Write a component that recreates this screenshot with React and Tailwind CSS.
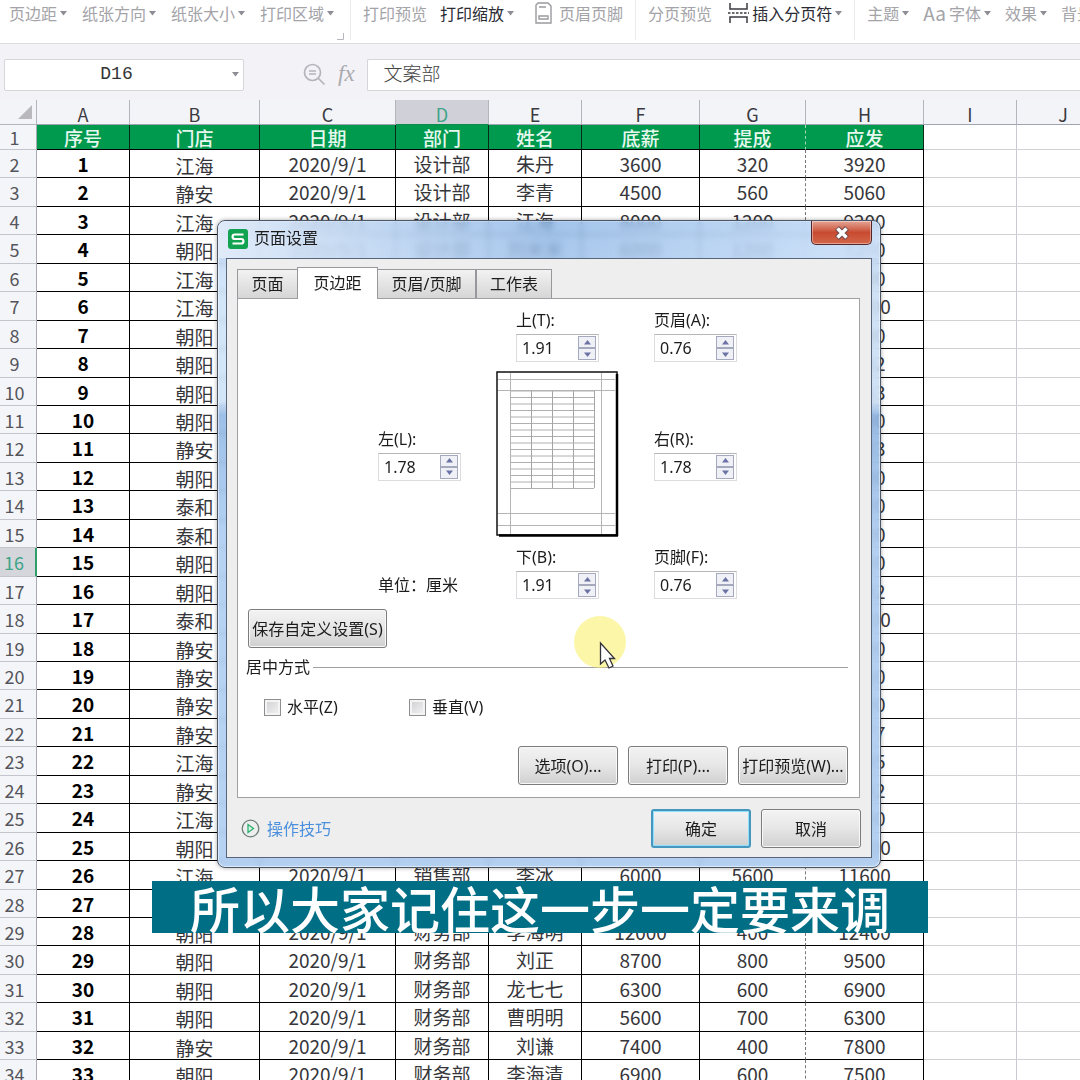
const rows = [
  ['江海', '2020/9/1', '设计部', '朱丹', '3600', '320', '3920'],
  ['静安', '2020/9/1', '设计部', '李青', '4500', '560', '5060'],
  ['江海', '2020/9/1', '设计部', '江海', '8000', '1200', '9200'],
  ['朝阳', '2020/9/1', '设计部', '刘米米', '6000', '1200', '7200'],
  ['江海', '', '', '', '', '', '4300'],
  ['江海', '', '', '', '', '', '10200'],
  ['朝阳', '', '', '', '', '', '6500'],
  ['朝阳', '', '', '', '', '', '5432'],
  ['朝阳', '', '', '', '', '', '4563'],
  ['朝阳', '', '', '', '', '', '7800'],
  ['静安', '', '', '', '', '', '6323'],
  ['朝阳', '', '', '', '', '', '5600'],
  ['泰和', '', '', '', '', '', '7200'],
  ['泰和', '', '', '', '', '', '6900'],
  ['朝阳', '', '', '', '', '', '8100'],
  ['朝阳', '', '', '', '', '', '5642'],
  ['泰和', '', '', '', '', '', '10600'],
  ['静安', '', '', '', '', '', '7300'],
  ['静安', '', '', '', '', '', '6600'],
  ['静安', '', '', '', '', '', '5900'],
  ['静安', '', '', '', '', '', '4877'],
  ['江海', '', '', '', '', '', '6745'],
  ['静安', '', '', '', '', '', '7532'],
  ['江海', '', '', '', '', '', '8800'],
  ['朝阳', '', '', '', '', '', '12300'],
  ['江海', '2020/9/1', '销售部', '李冰', '6000', '5600', '11600'],
  ['', '', '', '', '', '', ''],
  ['朝阳', '2020/9/1', '财务部', '李海明', '12000', '400', '12400'],
  ['朝阳', '2020/9/1', '财务部', '刘正', '8700', '800', '9500'],
  ['朝阳', '2020/9/1', '财务部', '龙七七', '6300', '600', '6900'],
  ['朝阳', '2020/9/1', '财务部', '曹明明', '5600', '700', '6300'],
  ['静安', '2020/9/1', '财务部', '刘谦', '7400', '400', '7800'],
  ['朝阳', '2020/9/1', '财务部', '李海清', '6900', '600', '7500'],
];

const columns = ['A', 'B', 'C', 'D', 'E', 'F', 'G', 'H', 'I', 'J'];
const headings = ['序号', '门店', '日期', '部门', '姓名', '底薪', '提成', '应发'];

function Arrow() {
  return (
    <svg width="7" height="5" viewBox="0 0 7 5" className="shrink-0">
      <path d="M0 0h7L3.5 4.5z" fill="#8d8d95" />
    </svg>
  );
}

function Tool({ label, arrow, active, children }) {
  return (
    <button
      type="button"
      className={`flex h-[26px] shrink-0 items-center gap-[3px] whitespace-nowrap ${active ? 'text-[#2b2b33]' : 'text-[#a3a3a8]'}`}
    >
      {children}
      <span>{label}</span>
      {arrow && <Arrow />}
    </button>
  );
}

function Toolbar() {
  return (
    <div className="flex h-11 shrink-0 overflow-hidden border-b border-[#dcdce0] bg-white text-[16px] leading-6">
      <div className="flex h-10 shrink-0 gap-[15px] border-r border-[#ececf0] pr-[6px] pl-[9px]">
        <Tool label="页边距" arrow />
        <Tool label="纸张方向" arrow />
        <Tool label="纸张大小" arrow />
        <Tool label="打印区域" arrow />
        <svg width="7" height="7" viewBox="0 0 7 7" className="-ml-3 self-end">
          <path d="M6.5 0v6.5H0" fill="none" stroke="#b5b5bb" />
        </svg>
      </div>
      <div className="flex h-10 shrink-0 gap-[13px] border-r border-[#ececf0] px-3">
        <Tool label="打印预览" />
        <Tool label="打印缩放" arrow active />
        <Tool label="页眉页脚">
          <svg width="17" height="22" viewBox="0 0 17 22" className="mr-1 ml-2" fill="none" stroke="#9a9aa0" strokeWidth="1.4">
            <path d="M3 1h10l3 3v17H1V3z" />
            <path d="M4 5h7M4 17v-3h9v3z" />
          </svg>
        </Tool>
      </div>
      <div className="flex h-10 shrink-0 gap-4 border-r border-[#ececf0] px-3">
        <Tool label="分页预览" />
        <Tool label="插入分页符" arrow active>
          <svg width="21" height="22" viewBox="0 0 21 22" fill="none" stroke="#3a3a40" strokeWidth="1.5">
            <path d="M2 1v6h17V1M2 21v-6h17v6" />
            <path d="M0 11h21" strokeDasharray="2.5 1.5" />
          </svg>
        </Tool>
      </div>
      <div className="flex h-10 shrink-0 gap-[14px] px-3">
        <Tool label="主题" arrow />
        <Tool label="字体" arrow>
          <span className="text-[19px]">Aa</span>
        </Tool>
        <Tool label="效果" arrow />
        <Tool label="背景" />
      </div>
    </div>
  );
}

function FormulaBar() {
  return (
    <div className="flex h-14 shrink-0 items-center bg-[#f3f3f7] pt-[5px] pl-1">
      <div className="flex h-8 w-60 shrink-0 items-center rounded-xs border border-[#d5d5da] bg-white pr-1">
        <input
          aria-label="名称框"
          defaultValue="D16"
          className="min-w-0 flex-1 bg-transparent pr-1 text-center font-['Liberation_Mono',monospace] text-[18px] text-[#333] outline-none"
        />
        <Arrow />
      </div>
      <svg width="23" height="23" viewBox="0 0 23 23" className="ml-[59px] shrink-0" fill="none" stroke="#b4b4ba" strokeWidth="1.7">
        <circle cx="9.5" cy="9.5" r="8" />
        <path d="M15.5 15.5l6 6M6 8h7M6 11h7" />
      </svg>
      <span className="mr-3 ml-3 font-['Liberation_Serif',serif] text-[23px] text-[#aaaab0] italic">fx</span>
      <input
        aria-label="编辑栏"
        defaultValue="文案部"
        className="h-8 min-w-0 flex-1 rounded-l-xs border border-r-0 border-[#d5d5da] bg-white pb-1 pl-4 text-[19px] font-light text-[#444] outline-none"
      />
    </div>
  );
}

function RowHead({ n }) {
  const selected = n === 16;
  return (
    <th
      scope="row"
      className={`border-b pr-[7px] text-[18px] font-normal ${
        selected
          ? 'border-r-2 border-r-[#2f9e6b] border-b-[#c4c4cc] bg-[#d5d5dc] text-[#3ea588]'
          : 'border-r border-r-[#aaaab4] border-b-[#c4c4cc] bg-[#f4f5f9] text-[#55555c]'
      }`}
    >
      {n}
    </th>
  );
}

function Sheet() {
  return (
    <div className="min-h-0 flex-1 overflow-hidden bg-white">
      <table className="w-[1110px] table-fixed border-separate border-spacing-0 text-center text-[19px] leading-5 whitespace-nowrap text-[#36363a]">
        <colgroup>
          <col className="w-[37px]" />
          <col className="w-[93px]" />
          <col className="w-[130px]" />
          <col className="w-[136px]" />
          <col className="w-[93px]" />
          <col className="w-[93px]" />
          <col className="w-[118px]" />
          <col className="w-[106px]" />
          <col className="w-[118px]" />
          <col className="w-[93px]" />
          <col className="w-[93px]" />
        </colgroup>
        <thead>
          <tr className="h-[25px] bg-[#f3f4f8]">
            <td className="border-r border-b border-[#b4b4bc]">
              <svg width="14" height="14" viewBox="0 0 14 14" className="mr-1 ml-auto">
                <path d="M14 0v14H0z" fill="#b9b9bd" />
              </svg>
            </td>
            {columns.map((c) => (
              <th
                key={c}
                scope="col"
                className={`border-r border-b border-r-[#b4b4bc] pt-[3px] text-[18px] font-normal ${
                  c === 'D' ? 'border-b-[#0f8a4a] bg-[#d0d0d9] text-[#3ea588]' : 'border-b-[#9fa3b4] text-[#3a3a40]'
                }`}
              >
                {c}
              </th>
            ))}
          </tr>
          <tr className="h-[25px]">
            <RowHead n={1} />
            {headings.map((h) => (
              <th
                key={h}
                className={`border-b border-b-black bg-[#009a4e] pt-[2px] font-medium text-[#e6f8ee] ${
                  h === '提成' ? 'border-r border-dashed border-r-[#9fd8b8] [border-bottom-style:solid]' : 'border-r border-r-[#0b2a1a]'
                }`}
              >
                {h}
              </th>
            ))}
            <td className="border-r border-b border-r-[#c9c9d6] border-b-[#d2d2d6]"></td>
            <td className="border-r border-b border-r-[#c9c9d6] border-b-[#d2d2d6]"></td>
          </tr>
        </thead>
        <tbody>
          {rows.map((row, i) => (
            <tr key={i} className={(i % 9) % 2 ? 'h-[29px]' : 'h-[28px]'}>
              <RowHead n={i + 2} />
              <td className="border-r border-b border-black font-bold text-black">{i + 1}</td>
              {row.map((cell, j) => (
                <td
                  key={j}
                  className={`border-b border-b-black ${
                    j === 5 ? 'border-r border-dashed border-r-[#77777c] [border-bottom-style:solid]' : 'border-r border-r-black'
                  } ${j === 0 ? 'pt-1' : ''}`}
                >
                  {cell}
                </td>
              ))}
              <td className="border-r border-b border-r-[#c9c9d6] border-b-[#d2d2d6]"></td>
              <td className="border-r border-b border-r-[#c9c9d6] border-b-[#d2d2d6]"></td>
            </tr>
          ))}
        </tbody>
      </table>
    </div>
  );
}

function SpinButton({ up }) {
  return (
    <button
      type="button"
      tabIndex={-1}
      aria-label={up ? '增加' : '减少'}
      className="flex h-3 w-[18px] items-center justify-center border border-[#a5a9bd] bg-[#f0f1f7]"
    >
      <svg width="7" height="5" viewBox="0 0 7 5">
        <path d={up ? 'M0 4.5L3.5 0 7 4.5z' : 'M0 .5L3.5 5 7 .5z'} fill="#6b73a5" />
      </svg>
    </button>
  );
}

function MarginField({ id, label, value }) {
  return (
    <div className="flex h-[53px] w-[83px] flex-col justify-between">
      <label htmlFor={id} className="h-[22px] leading-[22px] whitespace-nowrap">
        {label}
      </label>
      <div className="flex h-7 items-center border border-[#dcdce0] border-t-[#b5b5ba] bg-white pr-[2px]">
        <input id={id} defaultValue={value} className="min-w-0 flex-1 bg-transparent pl-[5px] outline-none" />
        <div className="flex flex-col">
          <SpinButton up />
          <SpinButton />
        </div>
      </div>
    </div>
  );
}

function PagePreview() {
  const lines = Array.from({ length: 16 }, (_, i) => 20 + i * 6.5);
  return (
    <svg width="123" height="166" viewBox="0 0 123 166" fill="none">
      <rect x="1" y="1" width="120" height="163" fill="#fff" stroke="#111" strokeWidth="1.5" />
      <path d="M121 3v162M3 164.5h119" stroke="#000" strokeWidth="2.5" />
      <path d="M14.5 2v161M105.5 2v161M2 8.5h118M2 19.5h118M2 142.5h118M2 154.5h118" stroke="#b5b5b5" />
      {lines.map((y) => (
        <path key={y} d={`M15 ${y}h83`} stroke="#b0b0b0" />
      ))}
      <path d="M35.5 20v97M56.5 20v97M77.5 20v97M98.5 20v97" stroke="#a5a5a5" />
    </svg>
  );
}

function Button({ className, primary, children }) {
  return (
    <button
      type="button"
      className={`h-[39px] rounded-[3px] bg-linear-to-b from-[#f3f3f3] via-[#e6e6e6] to-[#d0d0d0] whitespace-nowrap ${
        primary ? 'border-2 border-[#4796bd] inset-ring-1 inset-ring-[#8fe0fa]' : 'border border-[#7c7c7c] inset-ring-1 inset-ring-[#f8f8f8]'
      } ${className}`}
    >
      {children}
    </button>
  );
}

function Tab({ label, active, className }) {
  return (
    <button
      type="button"
      role="tab"
      aria-selected={!!active}
      className={`border border-b-0 border-[#98989c] whitespace-nowrap ${
        active ? '-mx-px -mb-px h-8 bg-white pb-px' : 'h-[29px] bg-linear-to-b from-[#f2f2f2] to-[#d6d6d6]'
      } ${className}`}
    >
      {label}
    </button>
  );
}

function Check({ id, label }) {
  return (
    <div className="flex h-5 items-center gap-[6px]">
      <input
        id={id}
        type="checkbox"
        className="size-[17px] appearance-none border border-[#8e8f8f] bg-linear-to-br from-[#cfcfd2] to-[#f4f4f4] inset-ring-2 inset-ring-[#f4f4f4]"
      />
      <label htmlFor={id}>{label}</label>
    </div>
  );
}

function PageSetupDialog() {
  return (
    <div
      role="dialog"
      aria-label="页面设置"
      className="absolute top-[220px] left-[217px] w-[664px] rounded-lg border border-[#4b5666] bg-[linear-gradient(to_bottom,#9cc4f0a6_0%,#c9dff8cc_10%,#c9dff8cc_28%,#86b0e2cc_30%,#a9cbf2d9_50%,#a9cbf2d9_100%)] px-2 pb-[9px] font-['Noto_Sans','Noto_Sans_CJK_SC',sans-serif] text-[16px] leading-5 text-[#1c1c1c] shadow-[0_0_4px_rgba(0,0,0,0.35)] inset-ring-1 inset-ring-white/50 backdrop-blur-[3px]"
    >
      <div className="-mx-2 flex h-[37px] items-start rounded-t-lg bg-linear-to-r from-[#e6eefa]/80 via-[#5f93d2]/30 to-[#d4e5fa]/60 pr-2 pl-[10px]">
        <svg width="20" height="20" viewBox="0 0 20 20" className="mt-2">
          <rect width="20" height="20" rx="3" fill="#12a352" />
          <path d="M15.500 5.500H6.800a2 2 0 0 0 0 4.500h6.400a2 2 0 0 1 0 4.500H4.500" fill="none" stroke="#fff" strokeWidth="2.200" />
        </svg>
        <h2 className="mt-[7px] ml-[6px] flex-1">页面设置</h2>
        <button
          type="button"
          aria-label="关闭"
          className="flex h-6 w-[61px] items-center justify-center rounded-b-[5px] border border-t-0 border-[#54262a] bg-linear-to-b from-[#e3a596] via-[#c84a30] to-[#d2664a] inset-ring-1 inset-ring-white/40"
        >
          <svg width="18" height="14" viewBox="0 0 18 14" fill="none">
            <path d="M4 2l10 10M14 2l-10 10" stroke="#6b4a50" strokeWidth="5.500" />
            <path d="M4.500 2.500l9 9M13.500 2.500l-9 9" stroke="#fff" strokeWidth="3.500" />
          </svg>
        </button>
      </div>

      <div className="border border-[#56657a] bg-[#eeeeee] pt-2 pr-[11px] pb-[9px] pl-[10px]">
        <div role="tablist" className="flex items-end">
          <Tab label="页面" className="w-[61px]" />
          <Tab label="页边距" active className="w-[81px]" />
          <Tab label="页眉/页脚" className="w-[99px]" />
          <Tab label="工作表" className="w-[76px]" />
        </div>

        <div className="border border-[#a0a0a4] bg-white pt-[10px] pr-[11px] pb-3 pl-[10px]">
          <div className="grid grid-cols-[118px_158px_1fr] gap-y-[9px] pl-[130px]">
            <span />
            <div className="pl-5">
              <MarginField id="top" label="上(T):" value="1.91" />
            </div>
            <MarginField id="header" label="页眉(A):" value="0.76" />

            <div className="self-center">
              <MarginField id="left" label="左(L):" value="1.78" />
            </div>
            <PagePreview />
            <div className="self-center">
              <MarginField id="right" label="右(R):" value="1.78" />
            </div>

            <span className="self-end leading-7">单位：厘米</span>
            <div className="pl-5">
              <MarginField id="bottom" label="下(B):" value="1.91" />
            </div>
            <MarginField id="footer" label="页脚(F):" value="0.76" />
          </div>

          <Button className="mt-[10px] w-[139px]">保存自定义设置(S)</Button>

          <div className="mt-[9px] -ml-[2px] flex items-center gap-[3px]">
            <span>居中方式</span>
            <hr className="flex-1 border-[#a0a0a4]" />
          </div>
          <div className="mt-5 grid grid-cols-[145px_145px] pl-4">
            <Check id="horizontal" label="水平(Z)" />
            <Check id="vertical" label="垂直(V)" />
          </div>

          <div className="mt-[29px] flex justify-end gap-[10px]">
            <Button className="w-[100px]">选项(O)...</Button>
            <Button className="w-[100px]">打印(P)...</Button>
            <Button className="w-[110px]">打印预览(W)...</Button>
          </div>
        </div>

        <div className="-mr-px mt-[11px] flex items-center gap-[10px]">
          <a href="#tips" className="flex flex-1 items-center gap-[7px] pl-1 text-[#4c8fdc]">
            <svg width="19" height="19" viewBox="0 0 19 19" fill="none">
              <circle cx="9.5" cy="9.5" r="8.3" stroke="#6f7f78" strokeWidth="1.3" />
              <path d="M7 5.5v8l5.5-4z" fill="#d6f5e4" stroke="#2fb070" strokeWidth="1.3" />
            </svg>
            操作技巧
          </a>
          <Button primary className="w-[100px]">确定</Button>
          <Button className="w-[100px]">取消</Button>
        </div>
      </div>
    </div>
  );
}

function Pointer() {
  return (
    <div className="pointer-events-none absolute top-[616px] left-[574px]">
      <svg width="54" height="54" viewBox="0 0 54 54">
        <circle cx="26" cy="26" r="26" fill="#f8ee60" fillOpacity="0.55" />
        <path d="M26.500 27v21l4.500-4 4 8 4-2-3.500-7.500h5z" fill="#fff" stroke="#33333a" strokeWidth="1.3" />
      </svg>
    </div>
  );
}

export default function App() {
  return (
    <div className="relative flex h-screen flex-col overflow-hidden bg-[#f3f3f7] font-['Noto_Sans_CJK_SC',sans-serif]">
      <Toolbar />
      <FormulaBar />
      <Sheet />
      <PageSetupDialog />
      <Pointer />
      <p className="absolute top-[881px] left-[152px] w-[776px] bg-[#006f86] text-center text-[50px] leading-[52px] font-medium whitespace-nowrap text-white">
        所以大家记住这一步一定要来调
      </p>
    </div>
  );
}
